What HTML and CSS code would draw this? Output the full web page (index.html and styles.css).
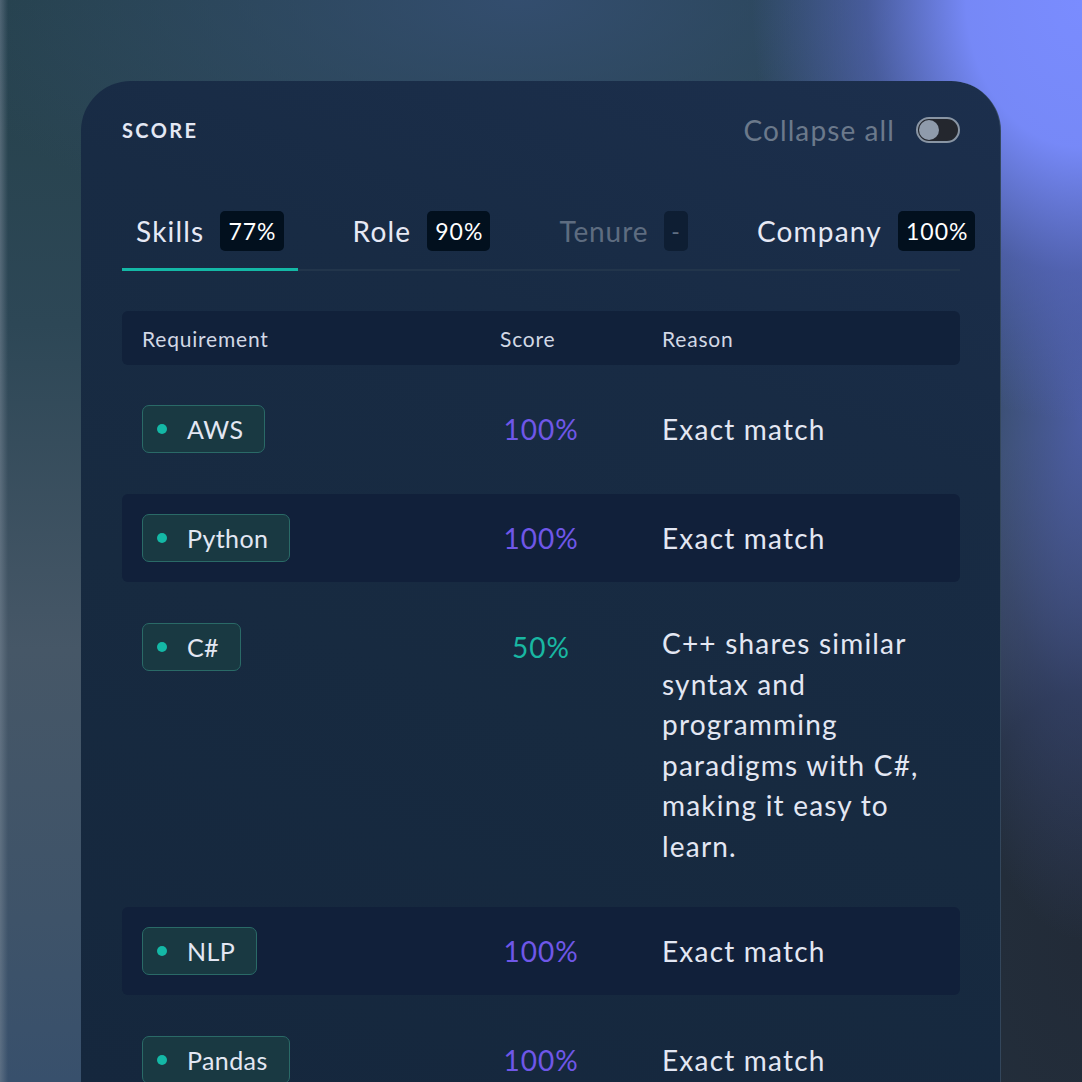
FILE: index.html
```html
<!DOCTYPE html>
<html lang="en">
<head>
<meta charset="utf-8">
<title>Score</title>
<link rel="stylesheet" href="styles.css">
</head>
<body>
<div class="stage">
  <section class="card">
    <header class="card-head">
      <h2 class="title">SCORE</h2>
      <div class="collapse">
        <span>Collapse all</span>
        <span class="toggle"><span class="knob"></span></span>
      </div>
    </header>

    <nav class="tabs">
      <div class="tab active"><span>Skills</span><span class="badge">77%</span></div>
      <div class="tab"><span>Role</span><span class="badge">90%</span></div>
      <div class="tab muted"><span>Tenure</span><span class="badge empty">-</span></div>
      <div class="tab"><span>Company</span><span class="badge">100%</span></div>
    </nav>

    <div class="table">
      <div class="thead">
        <div class="cell">Requirement</div>
        <div class="cell">Score</div>
        <div class="cell">Reason</div>
      </div>
      <div class="rows">
        <div class="trow">
          <div class="cell"><span class="pill"><span class="dot"></span>AWS</span></div>
          <div class="cell score full">100%</div>
          <div class="cell reason">Exact match</div>
        </div>
        <div class="trow alt">
          <div class="cell"><span class="pill"><span class="dot"></span>Python</span></div>
          <div class="cell score full">100%</div>
          <div class="cell reason">Exact match</div>
        </div>
        <div class="trow">
          <div class="cell"><span class="pill"><span class="dot"></span>C#</span></div>
          <div class="cell score half">50%</div>
          <div class="cell reason">C++ shares similar syntax and programming paradigms with C#, making it easy to learn.</div>
        </div>
        <div class="trow alt">
          <div class="cell"><span class="pill"><span class="dot"></span>NLP</span></div>
          <div class="cell score full">100%</div>
          <div class="cell reason">Exact match</div>
        </div>
        <div class="trow">
          <div class="cell"><span class="pill"><span class="dot"></span>Pandas</span></div>
          <div class="cell score full">100%</div>
          <div class="cell reason">Exact match</div>
        </div>
      </div>
    </div>
  </section>
</div>
</body>
</html>
```

FILE: styles.css
```css
* { box-sizing: border-box; }

html, body {
  margin: 0;
  width: 1082px;
  height: 1082px;
  overflow: hidden;
}

body {
  font-family: "Lato", "Open Sans", sans-serif;
  color: #e3e7f3;
  background:
    radial-gradient(ellipse 330px 420px at 1082px 0px, #7a8cff 0%, rgba(122,140,255,0.95) 35%, rgba(95,110,210,0.55) 65%, rgba(70,85,160,0) 100%),
    radial-gradient(ellipse 160px 520px at 1082px 420px, rgba(80,96,176,0.85) 0%, rgba(70,85,150,0.4) 55%, rgba(60,70,120,0) 100%),
    radial-gradient(ellipse 260px 520px at 1082px 950px, #222b38 0%, #232e3b 50%, rgba(35,46,59,0) 100%),
    radial-gradient(ellipse 600px 260px at 520px 0px, rgba(52,78,112,0.95) 0%, rgba(52,78,112,0) 100%),
    linear-gradient(90deg, rgba(120,135,150,0.55) 0px, rgba(120,135,150,0) 8px),
    linear-gradient(180deg, #25414b 0%, #2d4756 30%, #465767 60%, #3e5369 85%, #38506c 100%);
}

.stage {
  height: 1082px;
  padding: 81px 81px 0 81px;
}

.card {
  height: 1001px;
  overflow: hidden;
  border-radius: 50px 50px 0 0;
  padding: 35px 40px 0 41px;
  background: linear-gradient(200deg, #1c2f4d 0%, #182b44 30%, #172a40 60%, #15273d 100%);
  border-right: 1px solid rgba(110, 130, 150, 0.35);
}

/* header */
.card-head {
  height: 28px;
  display: flex;
  align-items: center;
  justify-content: space-between;
}

.title {
  margin: 0;
  font-size: 20px;
  font-weight: 700;
  letter-spacing: 2.4px;
  color: #e4e8f4;
}

.collapse {
  display: flex;
  align-items: center;
  gap: 21px;
  font-size: 28px;
  color: #6b798b;
  letter-spacing: 1.1px;
}

.toggle {
  width: 44px;
  height: 26px;
  border-radius: 13px;
  border: 2px solid #8995a4;
  background: #24272e;
  display: flex;
  align-items: center;
  padding: 0 1px;
}

.knob {
  width: 20px;
  height: 20px;
  border-radius: 50%;
  background: #8f9bab;
}

/* tabs */
.tabs {
  margin-top: 67px;
  display: flex;
  gap: 41px;
  border-bottom: 2px solid #22354b;
}

.tab {
  flex-shrink: 0;
  display: flex;
  align-items: center;
  gap: 16px;
  padding: 0 14px 17px 14px;
  margin-bottom: -2px;
  border-bottom: 3px solid transparent;
  font-size: 28px;
  letter-spacing: 1.2px;
  color: #e6e9f5;
}

.tab.active {
  border-bottom-color: #14b8a6;
}

.tab.muted {
  color: #5e6c80;
  letter-spacing: 0.9px;
}

.badge {
  height: 40px;
  display: flex;
  align-items: center;
  padding: 0 7px 0 8px;
  border-radius: 5px;
  background: #02101e;
  color: #ffffff;
  font-size: 23px;
  letter-spacing: 1px;
}

.badge.empty {
  background: #0e1e33;
  color: #5f6e82;
  padding: 0 7px;
}

/* table */
.table {
  margin-top: 40px;
}

.thead,
.trow {
  display: grid;
  grid-template-columns: 318px 122px 1fr;
  column-gap: 40px;
  border-radius: 6px;
}

.cell {
  padding: 0 20px;
}

.thead {
  height: 54px;
  align-items: center;
  background: #11213a;
  font-size: 21px;
  letter-spacing: 0.8px;
  color: #d2d8e5;
}

.rows {
  margin-top: 20px;
  display: flex;
  flex-direction: column;
  gap: 21px;
}

.trow {
  padding: 20px 0;
  align-items: start;
  font-size: 28px;
  letter-spacing: 1.2px;
}

.trow.alt {
  background: #11203a;
}

.pill {
  display: inline-flex;
  align-items: center;
  gap: 20px;
  height: 48px;
  padding: 0 21px 0 14px;
  border: 1.5px solid #2a6a67;
  border-radius: 7px;
  background: #193942;
  font-size: 25px;
  letter-spacing: 0.4px;
  color: #e3e7f3;
}

.dot {
  width: 10px;
  height: 10px;
  border-radius: 50%;
  background: #14b8a6;
}

.score {
  text-align: center;
  line-height: 48px;
  letter-spacing: 1px;
}

.score.full { color: #6f57e8; }
.score.half { color: #19b7a2; }

.reason {
  align-self: center;
  line-height: 40.5px;
  color: #e3e7f3;
}
```
